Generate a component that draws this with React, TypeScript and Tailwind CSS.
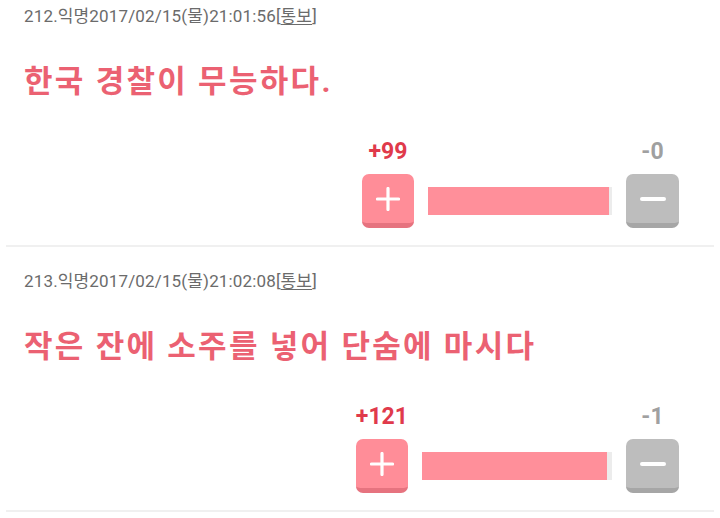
import React from "react"

type Post = {
  no: number
  date: string
  text: string
  up: number
  down: number
  trackClass: string
}

const POSTS: Post[] = [
  {
    no: 212,
    date: "2017/02/15(물)21:01:56",
    text: "한국 경찰이 무능하다.",
    up: 99,
    down: 0,
    trackClass: "w-[184px]",
  },
  {
    no: 213,
    date: "2017/02/15(물)21:02:08",
    text: "작은 잔에 소주를 넣어 단숨에 마시다",
    up: 121,
    down: 1,
    trackClass: "w-[190px]",
  },
]

const FONT = "font-['Roboto','Noto_Sans_CJK_KR',sans-serif]"

function PlusIcon() {
  return (
    <svg width="24" height="24" viewBox="0 0 24 24">
      <path d="M12 1.5v21M1.5 12h21" stroke="#fff" strokeWidth="3.2" strokeLinecap="round" />
    </svg>
  )
}

function MinusIcon() {
  return (
    <svg width="26" height="6" viewBox="0 0 26 6">
      <path d="M2 3h22" stroke="#fff" strokeWidth="4" strokeLinecap="round" />
    </svg>
  )
}

function VoteBar({ post }: { post: Post }) {
  // fill leaves a sliver of track visible on the right
  const ratio = post.up / (post.up + post.down || 1)
  return (
    <div className="flex items-end justify-end pr-[41px] mt-[38px]">
      <div className="flex flex-col items-center">
        <div className="text-[23px] leading-[24px] font-bold text-[#e03a4b]">+{post.up}</div>
        <button className="mt-[10px] w-[52px] h-[54px] rounded-[7px] bg-[#ff8d98] border-b-[5px] border-[#e6737f] flex items-center justify-center">
          <PlusIcon />
        </button>
      </div>
      <div className={`${post.trackClass} h-[28px] mx-[14px] mb-[13px] bg-[#ececec]`}>
        <div className="h-full bg-[#ff8f9a]" style={{ width: `${ratio * 98.2}%` }} />
      </div>
      <div className="flex flex-col items-center">
        <div className="text-[23px] leading-[24px] font-bold text-[#a0a0a0]">-{post.down}</div>
        <button className="mt-[10px] w-[53px] h-[54px] rounded-[7px] bg-[#bdbdbd] border-b-[5px] border-[#a6a6a6] flex items-center justify-center">
          <MinusIcon />
        </button>
      </div>
    </div>
  )
}

function PostItem({ post }: { post: Post }) {
  return (
    <div>
      <div className="pt-[22px] pb-[17px]">
        {/* header: number, author, timestamp, report link */}
        <div className="pl-[24px] text-[17px] leading-[24px] tracking-[0.15px] text-[#6b6b6b]">
          {post.no}.익명{post.date}[<span className="underline underline-offset-[2px]">통보</span>]
        </div>
        <div className="pl-[24px] mt-[34px] text-[31px] leading-[40px] tracking-[2.3px] font-bold text-[#eb6172]">
          {post.text}
        </div>
        <VoteBar post={post} />
      </div>
      <div className="mx-[6px] h-[2px] bg-[#f0f0f0]" />
    </div>
  )
}

export default function App() {
  return (
    <div className={`w-[720px] h-[518px] overflow-hidden bg-white ${FONT}`}>
      <div className="-mt-[18px]">
        {POSTS.map((p) => (
          <PostItem key={p.no} post={p} />
        ))}
      </div>
    </div>
  )
}
